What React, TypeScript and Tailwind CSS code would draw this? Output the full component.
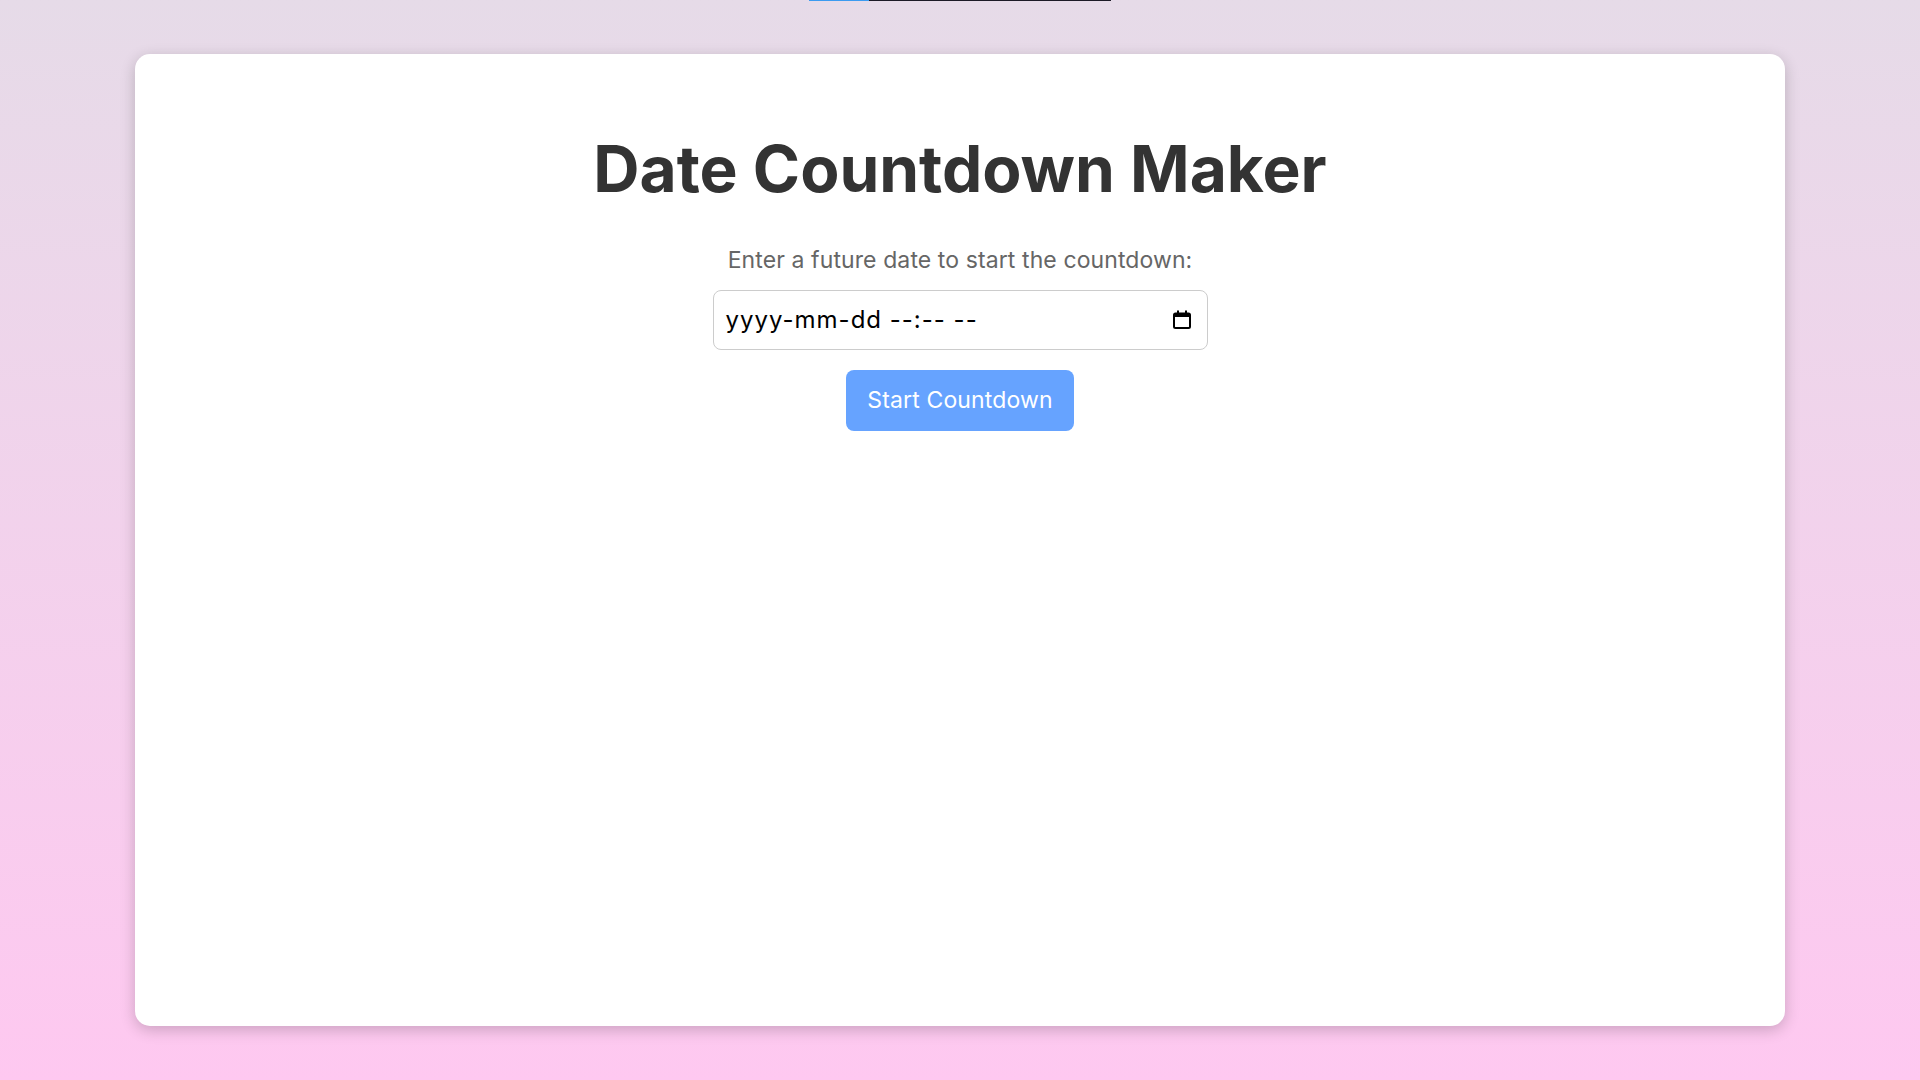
const App = () => {
    return (
        <div className="min-h-screen w-full flex flex-col items-center bg-gradient-to-b from-[#e6dbe8] to-[#fec8f0] font-['Inter','Open_Sans',sans-serif]">
            {/* Clipped progress strip at the very top */}
            <div className="h-[54px] w-full flex justify-center">
                <div className="h-px w-[302px] flex bg-[#1c1a26]">
                    <div className="h-px w-[60px] bg-[#3b9bf0]" />
                </div>
            </div>

            <main className="w-[1650px] h-[972px] flex flex-col items-center bg-white rounded-[15px] shadow-[0_4px_15px_rgba(0,0,0,0.2)]">
                <h1 className="mt-[70px] text-[64px] leading-[90px] font-bold text-[#333333] whitespace-nowrap">
                    Date Countdown Maker
                </h1>
                <p className="mt-[30px] text-[23px] leading-[32px] tracking-[0.1px] text-[#666666] whitespace-nowrap">
                    Enter a future date to start the countdown:
                </p>
                <div className="mt-[14px] w-[495px] h-[60px] flex items-center justify-between pl-3 pr-[15px] border border-[#cccccc] rounded-[8px] bg-white">
                    <span className="text-[24px] tracking-[1px] text-black whitespace-nowrap">yyyy-mm-dd --:-- --</span>
                    <svg width="20" height="20" viewBox="0 0 20 20" fill="none" className="shrink-0">
                        <rect x="2" y="3.5" width="16" height="14.5" rx="1.5" stroke="black" strokeWidth="2" />
                        <rect x="2" y="3.5" width="16" height="3.5" fill="black" />
                        <rect x="5" y="0.5" width="2" height="3" fill="black" />
                        <rect x="13" y="0.5" width="2" height="3" fill="black" />
                    </svg>
                </div>
                <button className="mt-[20px] w-[228px] h-[61px] flex items-center justify-center rounded-[8px] bg-[#66a3ff] text-white text-[23px] tracking-[0.15px] whitespace-nowrap">
                    Start Countdown
                </button>
            </main>
        </div>
    );
};

export default App;
